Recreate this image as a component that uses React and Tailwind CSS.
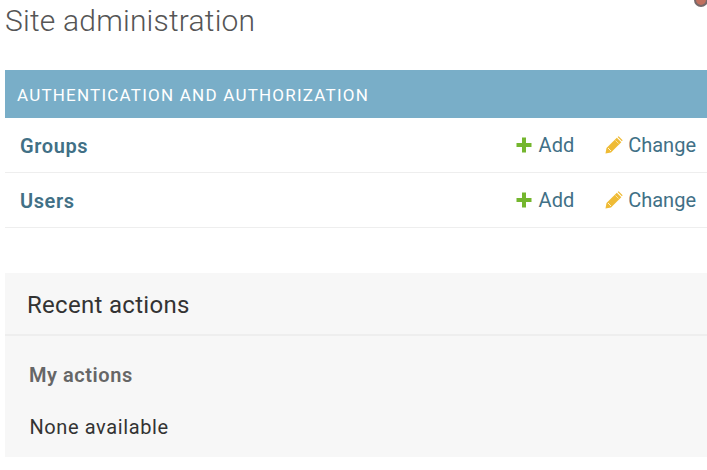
function Plus() {
  return (
    <svg viewBox="0 0 16 16" className="w-[16px] h-[16px]">
      <path d="M6 0.500h4V6h5.500v4H10v5.500H6V10H0.500V6H6z" fill="#74b62e" />
    </svg>
  );
}
function Pencil() {
  return (
    <svg viewBox="0 0 18 18" className="w-[18px] h-[18px]">
      <path d="M0.500 17.500l1-5.500L11.800 1.700l4.500 4.500L6 16.500z" fill="#efbb35" />
      <path d="M12.600 0.900l1-0.700 4 4-0.700 1z" fill="#efbb35" />
      <path d="M3 12l3 3" stroke="#fff3cf" strokeWidth="1" />
      <path d="M10.500 4.500l3 3" stroke="#fff3cf" strokeWidth="0.700" />
    </svg>
  );
}
function Row({ name }) {
  return (
    <div className="h-[55px] border-b border-[#eeeeee] flex items-center pl-[15px] pr-[11px] text-[20px] text-[#417086]">
      <span className="font-semibold flex-1 pt-[2px] tracking-[0.6px]">{name}</span>
      <span className="flex items-center gap-[7px] mr-[31px]"><Plus />Add</span>
      <span className="flex items-center gap-[5px]"><Pencil />Change</span>
    </div>
  );
}
export default function App() {
  return (
    <div className="relative w-[707px] h-[470px] overflow-hidden bg-white font-['Roboto',sans-serif]">
      <div className="absolute left-[694px] top-[-7px] w-[14px] h-[14px] rounded-full bg-[#c0705f] border-2 border-[#77696a]"></div>
      <div className="pl-[5px]">
        <h1 className="h-[70px] pt-[2px] text-[30px] leading-[38px] tracking-[0.2px] font-light text-[#555555]">Site administration</h1>
        <div className="h-[48px] bg-[#79aec8] flex items-center pl-[12px] pt-[4px] text-[17px] tracking-[1.22px] text-white">AUTHENTICATION AND AUTHORIZATION</div>
        <Row name="Groups" />
        <Row name="Users" />
        <div className="mt-[45px] h-[184px] bg-[#f7f7f7]">
          <div className="h-[63px] border-b-2 border-[#eeeeee] flex items-center pl-[22px] pt-[3px] text-[24px] tracking-[0.3px] text-[#333333]">Recent actions</div>
          <div className="pl-[24px] pt-[26px] text-[20px] leading-[26px] tracking-[0.55px] font-semibold text-[#666666]">My actions</div>
          <div className="pl-[24.500px] pt-[26px] text-[20px] leading-[26px] tracking-[0.6px] text-[#333333]">None available</div>
        </div>
      </div>
    </div>
  );
}
